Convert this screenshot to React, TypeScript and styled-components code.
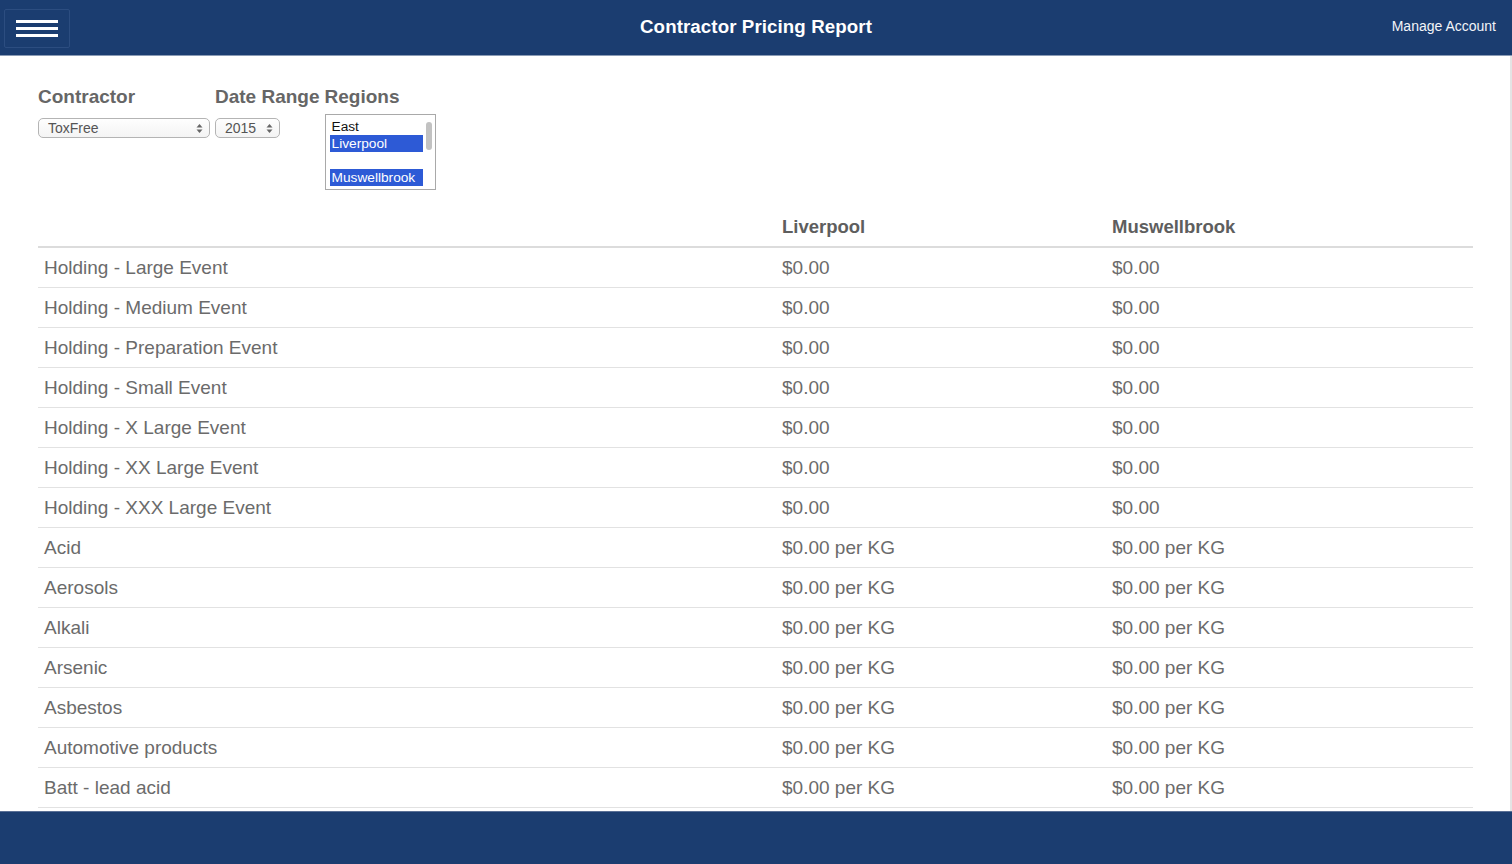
import React from "react";
import styled, { createGlobalStyle } from "styled-components";

const GlobalStyle = createGlobalStyle`
  html, body { margin: 0; padding: 0; height: 100%; overflow: hidden; }
  body { font-family: "Liberation Sans", Arial, sans-serif; background: #fff; }
  #root { height: 100%; }
`;

const NAVY = "#1b3d70";

const Page = styled.div`
  display: flex;
  flex-direction: column;
  height: 864px;
  width: 1512px;
`;

const Header = styled.header`
  height: 55px;
  flex: none;
  background: ${NAVY};
  border-bottom: 1px solid #8a9bb5;
  display: grid;
  grid-template-columns: 1fr auto 1fr;
  align-items: center;
  padding: 0 16px 0 4px;
  color: #fff;
`;

const MenuButton = styled.button`
  justify-self: start;
  width: 66px;
  height: 39px;
  margin-top: 1px;
  background: transparent;
  border: 1px solid #2c4d80;
  border-radius: 2px;
  display: flex;
  flex-direction: column;
  justify-content: center;
  gap: 4px;
  padding: 0 0 0 11px;
  cursor: pointer;
`;

const MenuLine = styled.span`
  display: block;
  width: 42px;
  height: 3px;
  background: #fff;
`;

const Title = styled.h1`
  margin: 0 0 2px 0;
  padding-left: 12px;
  font-size: 18.7px;
  font-weight: bold;
  letter-spacing: 0.1px;
`;

const AccountLink = styled.a`
  justify-self: end;
  font-size: 14px;
  color: #f2f4f8;
  text-decoration: none;
  margin-bottom: 3px;
`;

const Main = styled.main`
  flex: 1;
  overflow: hidden;
  border-right: 2px solid #e4e4e4;
  padding: 31px 37px 0 38px;
`;

const Filters = styled.div`
  display: flex;
  align-items: flex-start;
`;

const Field = styled.div<{ $width?: number }>`
  display: flex;
  flex-direction: column;
  ${(p) => (p.$width ? `width: ${p.$width}px;` : "")}
`;

const Label = styled.label<{ $indent?: number }>`
  font-size: 19px;
  font-weight: bold;
  color: #666;
  line-height: 20px;
  height: 20px;
  margin-bottom: 11px;
  margin-left: ${(p) => p.$indent ?? 0}px;
`;

const SelectBox = styled.div<{ $width: number }>`
  width: ${(p) => p.$width}px;
  height: 20px;
  box-sizing: border-box;
  border: 1px solid #b4b4b4;
  border-radius: 5px;
  background: linear-gradient(#fefefe, #f4f4f4);
  display: flex;
  align-items: center;
  justify-content: space-between;
  padding: 0 6px 0 9px;
  font-size: 14px;
  color: #555;
`;

const Arrows = () => (
  <svg width="7" height="11" viewBox="0 0 7 11">
    <path d="M3.5 1 L6.5 4.5 H0.5 Z" fill="#666" />
    <path d="M3.5 10 L6.5 6.5 H0.5 Z" fill="#666" />
  </svg>
);

const ListBox = styled.div`
  width: 111px;
  height: 76px;
  box-sizing: border-box;
  border: 1px solid #a9a9a9;
  margin: -4px 0 0 5px;
  display: flex;
  padding: 3px 0 3px 4px;
  background: #fff;
`;

const Options = styled.div`
  flex: 1;
  display: flex;
  flex-direction: column;
`;

const Option = styled.div<{ $selected?: boolean }>`
  height: 17px;
  line-height: 17px;
  font-size: 13.7px;
  padding-left: 2px;
  white-space: nowrap;
  color: ${(p) => (p.$selected ? "#fff" : "#111")};
  background: ${(p) => (p.$selected ? "#2d5ad6" : "transparent")};
`;

const Scrollbar = styled.div`
  width: 12px;
  display: flex;
  justify-content: center;
  padding-top: 4px;
`;

const Thumb = styled.div`
  width: 6px;
  height: 28px;
  border-radius: 3px;
  background: #c2c2c2;
`;

const Table = styled.table`
  width: 1435px;
  table-layout: fixed;
  border-collapse: collapse;
  margin-top: 17px;
  font-size: 19px;
  color: #6b6b6b;
`;

const Th = styled.th<{ $w: number }>`
  width: ${(p) => p.$w}px;
  box-sizing: border-box;
  text-align: left;
  font-weight: bold;
  font-size: 18.5px;
  color: #5e5e5e;
  height: 40px;
  padding: 0 6px;
  vertical-align: middle;
  border-bottom: 2px solid #dcdcdc;
`;

const Td = styled.td`
  height: 39px;
  padding: 0 6px;
  border-bottom: 1px solid #e2e2e2;
  vertical-align: middle;
  white-space: nowrap;
`;

const Footer = styled.footer`
  height: 52px;
  flex: none;
  background: ${NAVY};
  border-top: 1px solid #5a7096;
`;

const rows: [string, string][] = [
  ["Holding - Large Event", "$0.00"],
  ["Holding - Medium Event", "$0.00"],
  ["Holding - Preparation Event", "$0.00"],
  ["Holding - Small Event", "$0.00"],
  ["Holding - X Large Event", "$0.00"],
  ["Holding - XX Large Event", "$0.00"],
  ["Holding - XXX Large Event", "$0.00"],
  ["Acid", "$0.00 per KG"],
  ["Aerosols", "$0.00 per KG"],
  ["Alkali", "$0.00 per KG"],
  ["Arsenic", "$0.00 per KG"],
  ["Asbestos", "$0.00 per KG"],
  ["Automotive products", "$0.00 per KG"],
  ["Batt - lead acid", "$0.00 per KG"],
];

export default function App() {
  return (
    <>
      <GlobalStyle />
      <Page>
        <Header>
          <MenuButton aria-label="Menu">
            <MenuLine />
            <MenuLine />
            <MenuLine />
          </MenuButton>
          <Title>Contractor Pricing Report</Title>
          <AccountLink href="#">Manage Account</AccountLink>
        </Header>
        <Main>
          <Filters>
            <Field $width={177}>
              <Label>Contractor</Label>
              <SelectBox $width={172}>
                <span>ToxFree</span>
                <Arrows />
              </SelectBox>
            </Field>
            <Field>
              <Label>Date Range</Label>
              <SelectBox $width={65}>
                <span>2015</span>
                <Arrows />
              </SelectBox>
            </Field>
            <Field>
              <Label $indent={5}>Regions</Label>
              <ListBox>
                <Options>
                  <Option>East</Option>
                  <Option $selected>Liverpool</Option>
                  <Option>&nbsp;</Option>
                  <Option $selected>Muswellbrook</Option>
                </Options>
                <Scrollbar>
                  <Thumb />
                </Scrollbar>
              </ListBox>
            </Field>
          </Filters>
          <Table>
            <thead>
              <tr>
                <Th $w={738}></Th>
                <Th $w={330}>Liverpool</Th>
                <Th $w={367}>Muswellbrook</Th>
              </tr>
            </thead>
            <tbody>
              {rows.map(([name, price]) => (
                <tr key={name}>
                  <Td>{name}</Td>
                  <Td>{price}</Td>
                  <Td>{price}</Td>
                </tr>
              ))}
            </tbody>
          </Table>
        </Main>
        <Footer />
      </Page>
    </>
  );
}
